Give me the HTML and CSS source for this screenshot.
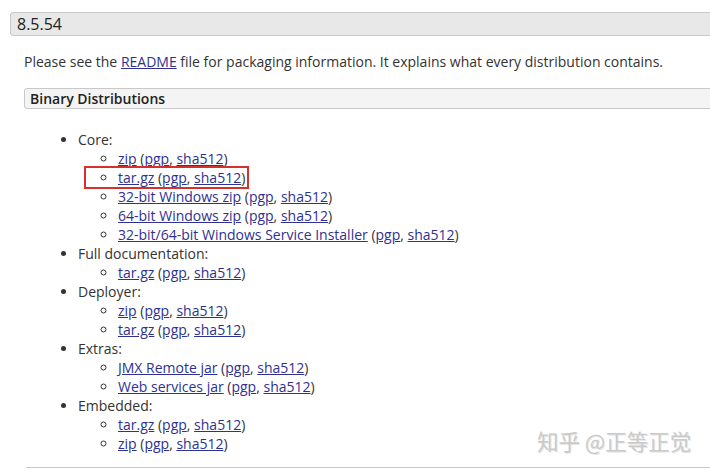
FILE: index.html
```html
<!DOCTYPE html>
<html>
<head>
<meta charset="utf-8">
<link rel="stylesheet" href="styles.css">
</head>
<body>
<div class="page">
  <h3 class="version">8.5.54</h3>
  <div class="content">
    <p class="intro">Please see the <a href="#">README</a> file for packaging information. It explains what every distribution contains.</p>
    <h4 class="section">Binary Distributions</h4>
    <ul class="dist">
      <li>Core:
        <ul>
          <li><a href="#">zip</a> (<a href="#">pgp</a>, <a href="#">sha512</a>)</li>
          <li><span class="mark"><a href="#">tar.gz</a> (<a href="#">pgp</a>, <a href="#">sha512</a>)</span></li>
          <li><a href="#">32-bit Windows zip</a> (<a href="#">pgp</a>, <a href="#">sha512</a>)</li>
          <li><a href="#">64-bit Windows zip</a> (<a href="#">pgp</a>, <a href="#">sha512</a>)</li>
          <li><a href="#">32-bit/64-bit Windows Service Installer</a> (<a href="#">pgp</a>, <a href="#">sha512</a>)</li>
        </ul>
      </li>
      <li>Full documentation:
        <ul>
          <li><a href="#">tar.gz</a> (<a href="#">pgp</a>, <a href="#">sha512</a>)</li>
        </ul>
      </li>
      <li>Deployer:
        <ul>
          <li><a href="#">zip</a> (<a href="#">pgp</a>, <a href="#">sha512</a>)</li>
          <li><a href="#">tar.gz</a> (<a href="#">pgp</a>, <a href="#">sha512</a>)</li>
        </ul>
      </li>
      <li>Extras:
        <ul>
          <li><a href="#">JMX Remote jar</a> (<a href="#">pgp</a>, <a href="#">sha512</a>)</li>
          <li><a href="#">Web services jar</a> (<a href="#">pgp</a>, <a href="#">sha512</a>)</li>
        </ul>
      </li>
      <li>Embedded:
        <ul>
          <li><a href="#">tar.gz</a> (<a href="#">pgp</a>, <a href="#">sha512</a>)</li>
          <li><a href="#">zip</a> (<a href="#">pgp</a>, <a href="#">sha512</a>)</li>
        </ul>
      </li>
    </ul>
    <div class="rule"></div>
  </div>
  <div class="watermark">知乎 @正等正觉</div>
</div>
</body>
</html>
```

FILE: styles.css
```css
html, body {
  margin: 0;
  padding: 0;
  background: #fff;
}
body {
  font-family: "Open Sans", "Noto Sans", "Noto Sans CJK SC", sans-serif;
  font-size: 14px;
  color: #333;
  width: 710px;
  height: 472px;
  overflow: hidden;
}
.page {
  position: relative;
  padding-top: 12px;
  height: 460px;
}
a {
  color: #2e3192;
  text-decoration: underline;
}
.version {
  margin: 0 -10px 0 10px;
  padding: 0 6px;
  height: 22px;
  line-height: 22px;
  font-size: 16px;
  font-weight: normal;
  color: #222;
  background: #e8e8e8;
  border: 1px solid #c8c8c8;
  border-radius: 3px;
}
.content {
  padding-left: 24px;
}
.intro {
  margin: 16px 0 0 0;
  line-height: 20px;
}
.section {
  margin: 16px -10px 0 0;
  padding: 0 5px;
  height: 19px;
  line-height: 19px;
  font-size: 14px;
  font-weight: 600;
  color: #222;
  background: #f4f4f4;
  border: 1px solid #c8c8c8;
  border-radius: 3px;
}
.dist {
  margin: 21px 0 0 0;
  padding-left: 54px;
  line-height: 19px;
}
.dist ul {
  margin: 0;
  padding-left: 40px;
  list-style-type: circle;
}
.mark {
  outline: 2px solid #d8302b;
  outline-offset: 0;
  padding: 0 2px 0 32px;
  margin-left: -32px;
}
.rule {
  margin: 14px -10px 0 2px;
  border-top: 1px solid #c8c8c8;
}
.watermark {
  position: absolute;
  left: 537px;
  top: 425px;
  font-family: "Noto Sans CJK SC", sans-serif;
  font-size: 21.5px;
  color: #cacaca;
  text-shadow: 1px 1px 0 #e6e6e6;
}
```
